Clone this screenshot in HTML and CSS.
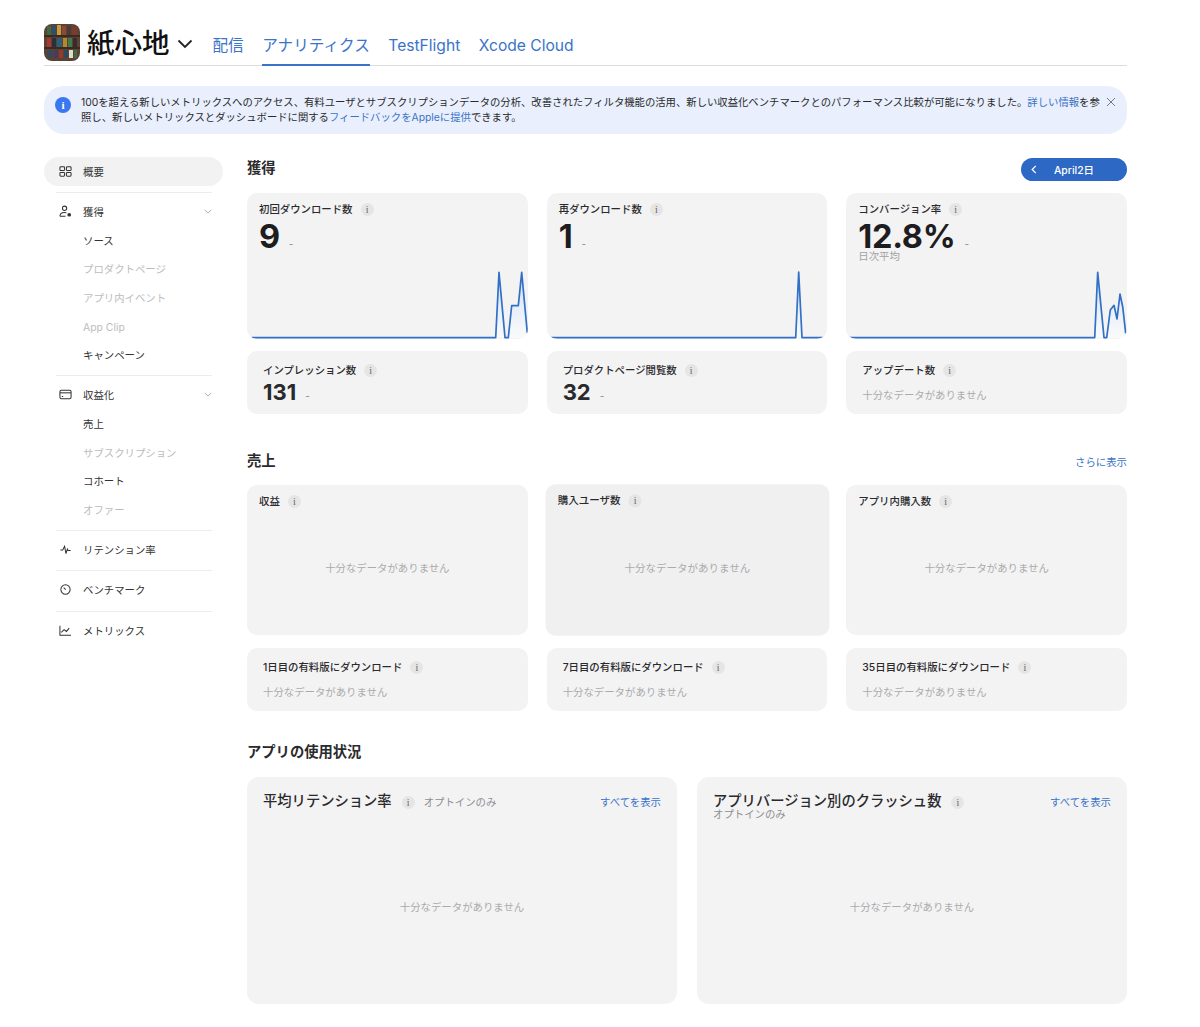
FILE: index.html
```html
<!DOCTYPE html>
<html lang="ja">
<head>
<meta charset="utf-8">
<title>アナリティクス</title>
<link rel="stylesheet" href="styles.css">
</head>
<body>
<div class="page">
  <header class="top">
    <svg class="app-icon" viewBox="0 0 36 37">
      <rect width="36" height="37" rx="8" fill="#5b4232"/>
      <rect x="0" y="11" width="36" height="2" fill="#3a2a20"/>
      <rect x="0" y="23" width="36" height="2" fill="#3a2a20"/>
      <g>
        <rect x="3" y="2" width="4" height="9" fill="#3f6a4a"/><rect x="8" y="2" width="4" height="9" fill="#2f4f6e"/><rect x="13" y="1" width="4" height="10" fill="#c99a3a"/><rect x="18" y="2" width="4" height="9" fill="#8a4a38"/><rect x="23" y="2" width="4" height="9" fill="#4b3b35"/><rect x="28" y="3" width="5" height="8" fill="#7c3a32"/>
        <rect x="3" y="14" width="4" height="9" fill="#a8392f"/><rect x="8" y="14" width="4" height="9" fill="#27313d"/><rect x="13" y="14" width="5" height="9" fill="#2f5f78"/><rect x="19" y="14" width="4" height="9" fill="#b28a2e"/><rect x="24" y="14" width="4" height="9" fill="#3f7a4e"/><rect x="29" y="14" width="4" height="9" fill="#3a2a30"/>
        <rect x="3" y="26" width="6" height="8" fill="#39475a"/><rect x="10" y="26" width="4" height="8" fill="#4a3a55"/><rect x="15" y="26" width="4" height="8" fill="#95382f"/><rect x="20" y="26" width="4" height="8" fill="#2f4a5c"/><rect x="25" y="26" width="4" height="8" fill="#e0dccf"/><rect x="30" y="26" width="3" height="8" fill="#3f6a4a"/>
      </g>
    </svg>
    <div class="app-name">紙心地</div>
    <svg class="app-chev" viewBox="0 0 16 10"><path d="M1.5 1.5 8 8l6.5-6.5"/></svg>
    <nav class="tabs">
      <a class="tab">配信</a>
      <a class="tab tab-on">アナリティクス</a>
      <a class="tab">TestFlight</a>
      <a class="tab">Xcode Cloud</a>
    </nav>
  </header>

  <div class="banner">
    <span class="banner-i">i</span>
    <p class="banner-text">100を超える新しいメトリックスへのアクセス、有料ユーザとサブスクリプションデータの分析、改善されたフィルタ機能の活用、新しい収益化ベンチマークとのパフォーマンス比較が可能になりました。<a class="link">詳しい情報</a>を参照し、新しいメトリックスとダッシュボードに関する<a class="link">フィードバックをAppleに提供</a>できます。</p>
    <svg class="banner-x" viewBox="0 0 10 10"><path d="M1 1l8 8M9 1l-8 8"/></svg>
  </div>

  <div class="layout">
    <aside class="side">
      <div class="side-row side-pill">
        <svg class="side-ic" viewBox="0 0 14 14"><rect x="1" y="2" width="5" height="4" rx="1"/><rect x="8" y="2" width="5" height="4" rx="1"/><rect x="1" y="8" width="5" height="4" rx="1"/><rect x="8" y="8" width="5" height="4" rx="1"/></svg>
        <span>概要</span>
      </div>
      <hr class="rule">
      <div class="side-row">
        <svg class="side-ic" viewBox="0 0 14 14"><circle cx="6" cy="3.5" r="2.3"/><path d="M1 12c0-3 2-4 5-4 .8 0 1.4.1 2 .3M1 12h6"/><circle cx="11" cy="10.5" r="2" fill="#333" stroke="none"/></svg>
        <span>獲得</span>
        <svg class="side-chev" viewBox="0 0 10 6"><path d="M1 1l4 4 4-4"/></svg>
      </div>
      <a class="sub">ソース</a>
      <a class="sub sub-off">プロダクトページ</a>
      <a class="sub sub-off">アプリ内イベント</a>
      <a class="sub sub-off">App Clip</a>
      <a class="sub">キャンペーン</a>
      <hr class="rule">
      <div class="side-row">
        <svg class="side-ic" viewBox="0 0 14 14"><rect x="1" y="2.5" width="12" height="9" rx="1.5"/><path d="M1 5.2h12"/><path d="M3 9.2h1.5"/></svg>
        <span>収益化</span>
        <svg class="side-chev" viewBox="0 0 10 6"><path d="M1 1l4 4 4-4"/></svg>
      </div>
      <a class="sub">売上</a>
      <a class="sub sub-off">サブスクリプション</a>
      <a class="sub">コホート</a>
      <a class="sub sub-off">オファー</a>
      <hr class="rule">
      <div class="side-row">
        <svg class="side-ic" viewBox="0 0 14 14"><path d="M1.5 7.5h2.5L6 3.5l1.5 8 1.5-5 .8 1.5h2.7"/></svg>
        <span>リテンション率</span>
      </div>
      <hr class="rule">
      <div class="side-row">
        <svg class="side-ic" viewBox="0 0 14 14"><circle cx="7" cy="7" r="5"/><path d="M5 5l2.2 2.2"/></svg>
        <span>ベンチマーク</span>
      </div>
      <hr class="rule">
      <div class="side-row">
        <svg class="side-ic" viewBox="0 0 14 14"><path d="M1 2v10h12"/><path d="M2.5 9l3-3 2.5 2 3-3.5"/></svg>
        <span>メトリックス</span>
      </div>
    </aside>

    <main class="main">
      <div class="sec-head">
        <h2 class="sec-title">獲得</h2>
        <button class="date-btn"><svg class="date-chev" viewBox="0 0 6 10"><path d="M5 1 1 5l4 4"/></svg><span>April2日</span></button>
      </div>
      <div class="grid">
        <div class="card card-chart">
          <div class="label">初回ダウンロード数<i class="info">i</i></div>
          <div class="big"><b>9</b><span class="dash">-</span></div>
          <svg class="chart" viewBox="0 0 281 70">
            <defs><linearGradient id="g" x1="0" y1="0" x2="0" y2="1"><stop offset="0" stop-color="#bcd6f7" stop-opacity=".75"/><stop offset="1" stop-color="#ffffff" stop-opacity=".55"/></linearGradient></defs>
            <polygon class="area" points="248.7,69 252,3.3 258,69 261.3,69 264.7,36.7 271.3,36.7 274.7,3.3 280.3,64 280.3,69"/>
            <polyline class="line" points="4.7,68.7 248.7,68.7 252,3.3 258,68.7 261.3,68.7 264.7,36.7 271.3,36.7 274.7,3.3 280.3,64"/>
          </svg>
        </div>
        <div class="card card-chart">
          <div class="label">再ダウンロード数<i class="info">i</i></div>
          <div class="big"><b>1</b><span class="dash">-</span></div>
          <svg class="chart" viewBox="0 0 281 70">
            <polygon class="area" points="248.7,69 251.7,3 255,69"/>
            <polyline class="line" points="3.7,68.7 248.7,68.7 251.7,3 255,68.7 276.3,68.7"/>
          </svg>
        </div>
        <div class="card card-chart">
          <div class="label">コンバージョン率<i class="info">i</i></div>
          <div class="big"><b>12.8%</b><span class="dash">-</span></div>
          <div class="avg">日次平均</div>
          <svg class="chart" viewBox="0 0 281 70">
            <polygon class="area" points="248.7,69 251.7,3.3 258,69 260.7,69 264.3,41 268,36.3 271,50 274,25 276.7,37.7 279.7,64.3 279.7,69"/>
            <polyline class="line" points="3,68.7 248.7,68.7 251.7,3.3 258,68.7 260.7,68.7 264.3,41 268,36.3 271,50 274,25 276.7,37.7 279.7,64.3"/>
          </svg>
        </div>
        <div class="card card-small">
          <div class="label">インプレッション数<i class="info">i</i></div>
          <div class="mid"><b>131</b><span class="dash">-</span></div>
        </div>
        <div class="card card-small">
          <div class="label">プロダクトページ閲覧数<i class="info">i</i></div>
          <div class="mid"><b>32</b><span class="dash">-</span></div>
        </div>
        <div class="card card-small">
          <div class="label">アップデート数<i class="info">i</i></div>
          <div class="none">十分なデータがありません</div>
        </div>
      </div>

      <div class="sec-head sec-next">
        <h2 class="sec-title">売上</h2>
        <a class="link more">さらに表示</a>
      </div>
      <div class="grid grid-wide">
        <div class="card card-tall">
          <div class="label">収益<i class="info">i</i></div>
          <div class="none-c">十分なデータがありません</div>
        </div>
        <div class="card card-tall card-hover">
          <div class="label">購入ユーザ数<i class="info">i</i></div>
          <div class="none-c">十分なデータがありません</div>
        </div>
        <div class="card card-tall">
          <div class="label">アプリ内購入数<i class="info">i</i></div>
          <div class="none-c">十分なデータがありません</div>
        </div>
        <div class="card card-small">
          <div class="label">1日目の有料版にダウンロード<i class="info">i</i></div>
          <div class="none">十分なデータがありません</div>
        </div>
        <div class="card card-small">
          <div class="label">7日目の有料版にダウンロード<i class="info">i</i></div>
          <div class="none">十分なデータがありません</div>
        </div>
        <div class="card card-small">
          <div class="label">35日目の有料版にダウンロード<i class="info">i</i></div>
          <div class="none">十分なデータがありません</div>
        </div>
      </div>

      <div class="sec-head sec-last">
        <h2 class="sec-title">アプリの使用状況</h2>
      </div>
      <div class="pair">
        <div class="card card-large">
          <div class="large-head">
            <span class="large-title">平均リテンション率</span><i class="info">i</i><span class="opt opt-inline">オプトインのみ</span>
            <a class="link all">すべてを表示</a>
          </div>
          <div class="none-c">十分なデータがありません</div>
        </div>
        <div class="card card-large">
          <div class="large-head">
            <span class="large-title">アプリバージョン別のクラッシュ数</span><i class="info">i</i>
            <a class="link all">すべてを表示</a>
          </div>
          <div class="opt opt-under">オプトインのみ</div>
          <div class="none-c">十分なデータがありません</div>
        </div>
      </div>
    </main>
  </div>
</div>
</body>
</html>
```
FILE: styles.css
```css
* { box-sizing: border-box; }
html, body { margin: 0; background: #fff; }
body {
  font-family: "Inter", "Noto Sans CJK JP", sans-serif;
  color: #1d1d1f;
  font-size: 10.4px;
}
.page { padding: 0 73px 0 44px; height: 1027px; overflow: hidden; }
.link { color: #3a74c8; text-decoration: none; }

.top { display: flex; align-items: flex-start; height: 66px; border-bottom: 1px solid #dcdcdc; }
.app-icon { width: 36px; height: 37px; margin-top: 24px; flex: none; }
.app-name { font-size: 27.5px; line-height: 36px; margin: 25px 0 0 7px; font-weight: 500; color: #111; }
.app-chev { width: 16px; height: 10px; margin: 39px 0 0 7px; fill: none; stroke: #222; stroke-width: 1.8; }
.tabs { display: flex; gap: 18.6px; margin-left: 20px; height: 66px; }
.tab { font-size: 15.6px; line-height: 22px; padding-top: 35px; height: 66px; color: #3a74c8; }
.tab-on { border-bottom: 2px solid #3a74c8; }

.banner {
  display: flex; align-items: flex-start; margin-top: 20px; height: 48px;
  background: #e9effc; border-radius: 20px; padding: 9px 11px 0 11px;
}
.banner-i {
  flex: none; width: 16px; height: 16px; margin: 2px 10px 0 0; border-radius: 50%;
  background: #3b78f0; color: #fff; text-align: center; font-size: 11px; line-height: 16px; font-weight: 700;
  font-family: "Liberation Serif", serif;
}
.banner-text { margin: 0; flex: 1; font-size: 10.35px; line-height: 15px; color: #2a2a2c; }
.banner-x { flex: none; width: 10px; height: 10px; margin: 2px 0 0 5px; fill: none; stroke: #6d7a90; stroke-width: 1; }

.layout { display: flex; gap: 24px; margin-top: 23px; }
.side { width: 179px; flex: none; }
.side-row { display: flex; align-items: center; height: 20px; padding: 0 11px 0 15px; gap: 11px; color: #333; }
.side-pill { height: 29px; background: #f2f2f3; border-radius: 15px; }
.side-ic { width: 13px; height: 13px; flex: none; fill: none; stroke: #333; stroke-width: 1.1; }
.side-chev { width: 8px; height: 5px; margin-left: auto; fill: none; stroke: #999; stroke-width: 1; }
.sub { display: block; height: 28.6px; line-height: 28.6px; padding-left: 39px; color: #333; }
.side-row + .sub { margin-top: 6.4px; }
.sub-off { color: #bcbcbc; }
.rule { border: 0; border-top: 1px solid #ececec; margin: 4.5px 11px 8.5px 12px; height: 0; }
.side-row + .rule { margin-top: 10.8px; }
.side-pill + .rule { margin-top: 6px; }

.main { flex: 1; min-width: 0; }
.sec-head { display: flex; align-items: center; justify-content: space-between; height: 24px; margin-bottom: 12px; }
.sec-next { margin-top: 35px; }
.sec-last { margin-top: 29px; margin-bottom: 13px; }
.sec-title { margin: 0; font-size: 14.3px; font-weight: 700; color: #2a2a2c; line-height: 22px; height: 24px; }
.sec-next .sec-title, .sec-last .sec-title { line-height: 24px; }
.date-btn {
  display: flex; align-items: center; width: 106px; height: 23px; padding: 0 0 0 10px; margin: 1px 0 0;
  border: 0; border-radius: 12px; background: #2d69c4; color: #fff; font: 500 10.4px "Inter", "Noto Sans CJK JP", sans-serif;
}
.date-chev { width: 6px; height: 9px; fill: none; stroke: #fff; stroke-width: 1.4; margin-right: 17px; }
.more, .all { font-size: 10.4px; }

.grid { display: grid; grid-template-columns: repeat(3, 1fr); gap: 12px 19px; }
.grid-wide { row-gap: 13px; }
.card { background: #f3f3f4; border-radius: 10px; display: flex; flex-direction: column; min-width: 0; }
.card-chart { height: 146px; padding: 9px 0 0 12px; overflow: hidden; }
.card-small { height: 63px; padding: 12px 16px 0; }
.card-tall { height: 150px; padding: 9px 12px 0; }
.card-hover { transform: scale(1.01); background: #f0f0f1; }
.label { display: flex; align-items: center; font-weight: 500; line-height: 15px; height: 15px; color: #2a2a2c; }
.info {
  display: inline-block; flex: none; width: 13px; height: 13px; margin-left: 8px; border-radius: 50%;
  background: #e5e5e5; color: #666; text-align: center; font: normal 10px/13px "Liberation Serif", serif;
}
.big { display: flex; align-items: baseline; height: 30px; margin-top: 5px; line-height: 30px; }
.big b { font-size: 32.5px; font-weight: 700; letter-spacing: -.3px; color: #1d1d1f; }
.mid { display: flex; align-items: baseline; height: 20px; line-height: 20px; margin-top: 4px; }
.mid b { font-size: 22px; font-weight: 700; color: #2a2a2c; }
.dash { color: #8b8b8b; font-size: 10px; margin-left: 9px; }
.avg { color: #a2a2a2; line-height: 10px; margin-top: 0; }
.chart { display: block; margin: auto 0 0 -12px; width: 281px; height: 70px; flex: none; overflow: visible; }
.line { fill: none; stroke: #3270c6; stroke-width: 1.7; stroke-linejoin: round; }
.area { fill: url(#g); }
.none { color: #ababab; line-height: 15px; margin-top: 10px; }
.none-c { flex: 1; display: flex; align-items: center; justify-content: center; color: #ababab; padding-bottom: 10px; }

.pair { display: grid; grid-template-columns: 1fr 1fr; gap: 20px; }
.card-large { height: 227px; padding: 14px 16px 0; border-radius: 12px; }
.large-head { display: flex; align-items: center; height: 20px; }
.large-title { font-size: 14.3px; font-weight: 500; color: #2a2a2c; line-height: 20px; }
.opt { color: #8e8e8e; }
.opt-inline { margin-left: 9px; }
.opt-under { line-height: 10px; height: 0; margin-top: -1px; }
.all { margin-left: auto; }
.card-large .info { margin: 2px 0 0 10px; }
.card-large .none-c { padding-bottom: 2px; }
```
